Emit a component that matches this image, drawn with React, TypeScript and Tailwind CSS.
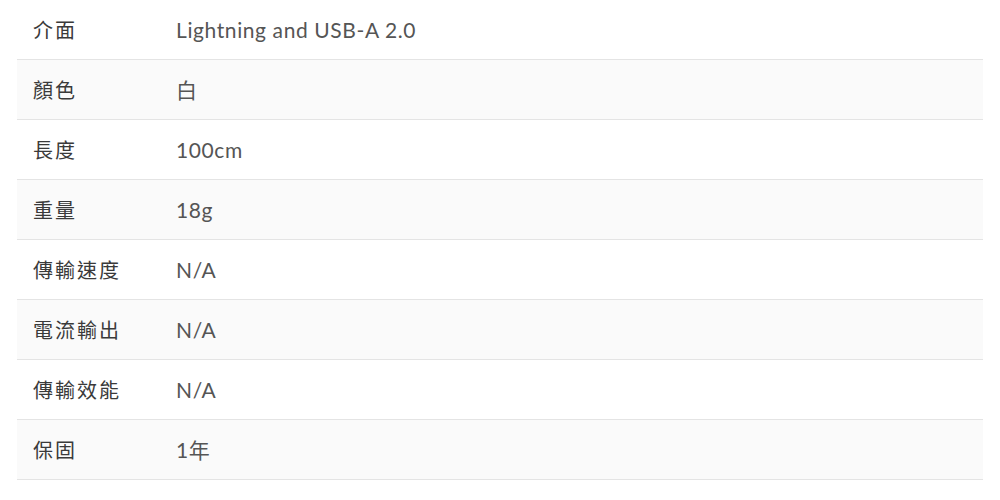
import React from 'react';

const specs: [string, string][] = [
  ['介面', 'Lightning and USB-A 2.0'],
  ['顏色', '白'],
  ['長度', '100cm'],
  ['重量', '18g'],
  ['傳輸速度', 'N/A'],
  ['電流輸出', 'N/A'],
  ['傳輸效能', 'N/A'],
  ['保固', '1年'],
];

export default function App() {
  return (
    <div className="bg-white px-[17px] font-['Lato','Noto_Sans_CJK_TC',sans-serif]">
      {specs.map(([label, value], i) => (
        <div
          key={label}
          className={`flex h-[60px] items-center border-b border-[#e4e4e4] ${i % 2 === 1 ? 'bg-[#fafafa]' : 'bg-white'}`}
        >
          <div className="w-[159px] shrink-0 pl-4 text-[20px] tracking-[2px] text-[#3a3a3a]">{label}</div>
          <div className="text-[21px] tracking-[0.6px] text-[#555]">{value}</div>
        </div>
      ))}
    </div>
  );
}
